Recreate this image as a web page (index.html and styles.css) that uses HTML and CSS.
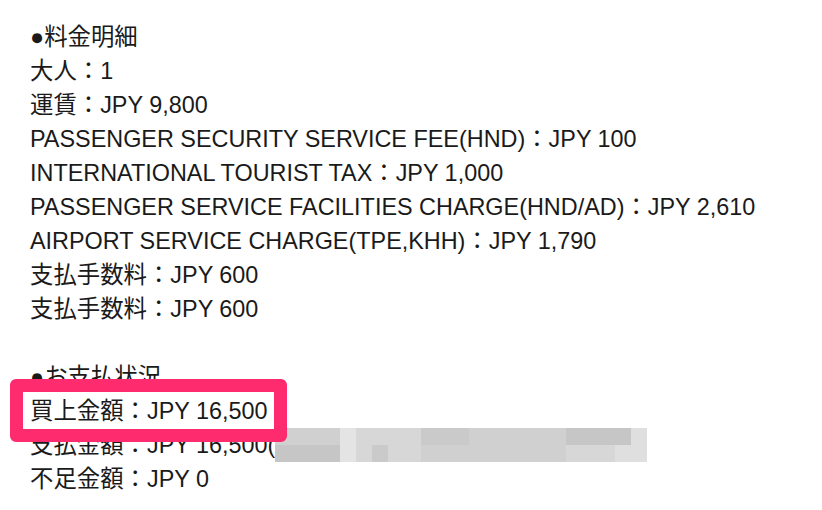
FILE: index.html
```html
<!DOCTYPE html>
<html lang="ja">
<head>
<meta charset="utf-8">
<link rel="stylesheet" href="styles.css">
</head>
<body>
<div class="detail">
  <div class="line">●料金明細</div>
  <div class="line">大人：1</div>
  <div class="line">運賃：JPY 9,800</div>
  <div class="line">PASSENGER SECURITY SERVICE FEE(HND)：JPY 100</div>
  <div class="line">INTERNATIONAL TOURIST TAX：JPY 1,000</div>
  <div class="line">PASSENGER SERVICE FACILITIES CHARGE(HND/AD)：JPY 2,610</div>
  <div class="line">AIRPORT SERVICE CHARGE(TPE,KHH)：JPY 1,790</div>
  <div class="line">支払手数料：JPY 600</div>
  <div class="line">支払手数料：JPY 600</div>
  <div class="line blank"></div>
  <div class="line">●お支払状況</div>
  <div class="line"><span class="mark">買上金額：JPY 16,500</span></div>
  <div class="line">支払金額：JPY 16,500(<span class="mosaic">
      <i class="c3"></i><i class="c3"></i><i class="c3"></i><i class="c3"></i><i class="c6"></i><i class="c4"></i><i class="c4"></i><i class="c4"></i><i class="c4"></i><i class="c2"></i><i class="c2"></i><i class="c2"></i><i class="c3"></i><i class="c3"></i><i class="c3"></i><i class="c3"></i><i class="c3"></i><i class="c3"></i><i class="c1"></i><i class="c1"></i><i class="c1"></i><i class="c1"></i><i class="c5"></i>
      <i class="c1"></i><i class="c1"></i><i class="c1"></i><i class="c1"></i><i class="c6"></i><i class="c4"></i><i class="c2"></i><i class="c4"></i><i class="c4"></i><i class="c3"></i><i class="c3"></i><i class="c3"></i><i class="c3"></i><i class="c3"></i><i class="c3"></i><i class="c3"></i><i class="c3"></i><i class="c3"></i><i class="c4"></i><i class="c4"></i><i class="c4"></i><i class="c5"></i><i class="c5"></i>
  </span></div>
  <div class="line">不足金額：JPY 0</div>
</div>
</body>
</html>
```
FILE: styles.css
```css
html, body {
  margin: 0;
  padding: 0;
  background: #ffffff;
}
body {
  font-family: "Liberation Sans", "Noto Sans CJK JP", sans-serif;
  font-size: 23.4px;
  line-height: 34px;
  color: #1a1a1a;
}
.detail {
  padding: 20px 0 0 30px;
}
.line {
  height: 34px;
  white-space: nowrap;
}
.mark {
  position: relative;
  display: inline-block;
}
.mark::after {
  content: "";
  position: absolute;
  left: -20px;
  right: -20px;
  top: -15px;
  bottom: -14px;
  border: 13px solid #fe2c6f;
  border-radius: 6px;
}
.mosaic {
  display: inline-grid;
  vertical-align: top;
  width: 372px;
  height: 34px;
  grid-template-columns: repeat(23, 1fr);
  grid-template-rows: 17px 17px;
}
.mosaic i {
  display: block;
}
.c1 { background: #c6c6c6; }
.c2 { background: #cacaca; }
.c3 { background: #d0d0d0; }
.c4 { background: #d7d7d7; }
.c5 { background: #dfdfdf; }
.c6 { background: #e4e4e4; }
```
